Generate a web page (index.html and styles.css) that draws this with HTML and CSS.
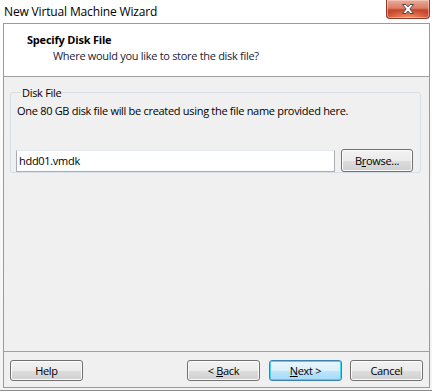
FILE: index.html
```html
<!DOCTYPE html>
<html lang="en">
<head>
    <meta charset="UTF-8">
    <title>New Virtual Machine Wizard</title>
    <link rel="stylesheet" href="styles.css">
</head>
<body>
    <div class="window">
        <!-- title bar -->
        <div class="titlebar">
            <span class="title">New Virtual Machine Wizard</span>
            <button type="button" class="close-btn" aria-label="Close">
                <svg width="16" height="12" viewBox="0 0 16 12">
                    <path d="M2.5 1.5h3.5l2 2.4 2-2.4h3.5l-3.6 4.5 3.6 4.5h-3.5l-2-2.4-2 2.4h-3.5l3.6-4.5z" fill="#fff" stroke="#4a4a4a" stroke-width="1"/>
                </svg>
            </button>
        </div>

        <div class="client">
            <!-- header -->
            <div class="wizard-header">
                <div class="header-title">Specify Disk File</div>
                <div class="header-sub">Where would you like to store the disk file?</div>
            </div>

            <!-- body -->
            <div class="wizard-body">
                <fieldset class="group-box">
                    <legend>Disk File</legend>
                    <p class="group-text">One 80 GB disk file will be created using the file name provided here.</p>
                    <div class="file-row">
                        <input type="text" class="file-input" value="hdd01.vmdk">
                        <button type="button" class="btn browse-btn">B<u>r</u>owse...</button>
                    </div>
                </fieldset>
            </div>

            <!-- buttons -->
            <div class="wizard-footer">
                <button type="button" class="btn">Help</button>
                <div class="nav-buttons">
                    <button type="button" class="btn">&lt; <u>B</u>ack</button>
                    <button type="button" class="btn btn-default"><u>N</u>ext &gt;</button>
                    <button type="button" class="btn cancel-btn">Cancel</button>
                </div>
            </div>
        </div>
    </div>
</body>
</html>
```

FILE: styles.css
```css
body {
    margin: 0;
    background-color: #fff;
    font-family: "Open Sans", "Noto Sans", sans-serif;
    font-size: 11px;
    letter-spacing: -0.3px;
    color: #000;
}

/* window frame */
.window {
    width: 432px;
    height: 391px;
    display: flex;
    flex-direction: column;
    background: linear-gradient(#ffffff, #f3f3f3);
    box-sizing: border-box;
    border-bottom: 1px solid #8c8c8c;
    padding: 0 2px 2px 3px;
}

.titlebar {
    height: 23px;
    display: flex;
    justify-content: space-between;
    align-items: flex-start;
}

.title {
    font-size: 12px;
    letter-spacing: -0.15px;
    margin-top: 3px;
    margin-left: 1px;
    color: #000;
}

.close-btn {
    width: 44px;
    height: 19px;
    padding: 0;
    border: 1px solid #8a3a2c;
    border-top: none;
    border-radius: 0 0 4px 4px;
    background:
        radial-gradient(ellipse 60% 45% at 50% 100%, rgba(255, 170, 120, 0.8), rgba(255, 170, 120, 0) 100%),
        linear-gradient(#e9ad9c 0%, #dc7d66 45%, #c7472f 55%, #c9442b 100%);
    box-shadow: inset 0 0 0 1px rgba(255, 220, 210, 0.5);
    display: flex;
    justify-content: center;
    align-items: center;
}

.client {
    flex: 1;
    display: flex;
    flex-direction: column;
    border: 1px solid #9a9a9a;
    background-color: #f0f0f0;
}

/* header */
.wizard-header {
    height: 53px;
    background-color: #fff;
    border-bottom: 1px solid #a0a0a0;
    box-sizing: border-box;
    padding: 8px 0 0 23px;
}

.header-title {
    font-weight: bold;
    font-size: 11px;
    letter-spacing: -0.2px;
    height: 16px;
}

.header-sub {
    padding-left: 26px;
    color: #1b1b3a;
}

/* body */
.wizard-body {
    flex: 1;
    padding: 8px 8px 0 6px;
    border-bottom: 1px solid #a0a0a0;
}

.group-box {
    margin: 0;
    padding: 2px 7px 0 5px;
    border: 1px solid #d5dfe5;
    border-radius: 3px;
}

.group-box legend {
    padding: 0 1px;
    margin-left: 5px;
}

.group-text {
    margin: 1px 0 0 1px;
}

.file-row {
    display: flex;
    align-items: center;
    justify-content: space-between;
    margin-top: 31px;
}

.file-input {
    width: 319px;
    height: 22px;
    box-sizing: border-box;
    border: 1px solid #abadb3;
    border-top-color: #e3e9ef;
    font-family: inherit;
    font-size: 11px;
    letter-spacing: inherit;
    padding: 0 2px;
    margin: 0;
}

.btn {
    width: 73px;
    height: 21px;
    padding: 0;
    font-family: inherit;
    font-size: 11px;
    letter-spacing: inherit;
    color: #000;
    border: 1px solid #707070;
    border-radius: 3px;
    background: linear-gradient(#f2f2f2 0%, #ebebeb 50%, #dddddd 51%, #cfcfcf 100%);
    box-shadow: inset 0 0 0 1px #fcfcfc;
}

.browse-btn {
    width: 72px;
    height: 23px;
}

.btn-default {
    border-color: #3c7fb1;
    background: linear-gradient(#eaf6fd 0%, #d9f0fc 50%, #bee6fd 51%, #a7d9f5 100%);
    box-shadow: inset 0 0 0 1px #48d4f9;
}

/* footer */
.wizard-footer {
    height: 35px;
    display: flex;
    justify-content: space-between;
    align-items: flex-start;
    padding: 8px 6px 0 6px;
    box-sizing: border-box;
}

.nav-buttons {
    display: flex;
    gap: 9px;
}

.cancel-btn {
    margin-left: -1px;
}
```
